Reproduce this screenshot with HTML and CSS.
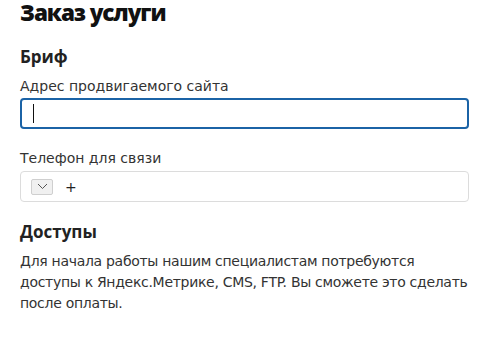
FILE: index.html
```html
<!DOCTYPE html>
<html lang="ru">
<head>
<meta charset="utf-8">
<link rel="stylesheet" href="styles.css">
</head>
<body>
<main class="page">
  <h1 class="title">Заказ услуги</h1>
  <h2 class="section">Бриф</h2>
  <div class="field">
    <label class="label">Адрес продвигаемого сайта</label>
    <div class="input input-focus"><span class="caret"></span></div>
  </div>
  <div class="field field-phone">
    <label class="label">Телефон для связи</label>
    <div class="input">
      <span class="country">
        <svg width="11" height="7" viewBox="0 0 11 7"><path d="M1 1 L5.5 5.5 L10 1" fill="none" stroke="#555" stroke-width="1"/></svg>
      </span>
      <span class="plus">+</span>
    </div>
  </div>
  <h2 class="section section-access">Доступы</h2>
  <p class="text">Для начала работы нашим специалистам потребуются доступы к Яндекс.Метрике, CMS, FTP. Вы сможете это сделать после оплаты.</p>
</main>
</body>
</html>
```
FILE: styles.css
```css
html, body {
  margin: 0;
  padding: 0;
  background: #fff;
}
body {
  font-family: "DejaVu Sans", "Open Sans", sans-serif;
  color: #222;
}
.page {
  width: 449px;
  padding: 0 26px 0 20px;
}
.title {
  margin: 0;
  font-family: "Open Sans", "DejaVu Sans", sans-serif;
  font-size: 22.5px;
  line-height: 25px;
  font-weight: 800;
  letter-spacing: -1.1px;
  color: #111;
}
.section {
  margin: 22px 0 0;
  font-family: "Open Sans", "DejaVu Sans", sans-serif;
  font-size: 17px;
  line-height: 20px;
  font-weight: 700;
  color: #222;
}
.field {
  margin-top: 10px;
  display: flex;
  flex-direction: column;
}
.field-phone {
  margin-top: 20px;
}
.label {
  font-size: 14px;
  line-height: 18px;
  color: #333;
  margin-bottom: 3px;
}
.field-phone .label {
  margin-bottom: 4px;
}
.input {
  box-sizing: border-box;
  height: 31px;
  border: 1px solid #dcdcdc;
  border-radius: 4px;
  display: flex;
  align-items: center;
  padding: 0 10px;
}
.input-focus {
  border: 2px solid #1b63a6;
  padding-left: 11px;
}
.caret {
  width: 1px;
  height: 19px;
  background: #111;
}
.country {
  box-sizing: border-box;
  width: 22px;
  height: 16px;
  background: #f0f0f0;
  border: 1px solid #cfcfcf;
  border-radius: 2px;
  display: flex;
  align-items: center;
  justify-content: center;
}
.plus {
  margin-left: 12px;
  font-size: 14px;
  color: #222;
}
.section-access {
  margin-top: 20px;
}
.text {
  margin: 9px -6px 0 0;
  font-size: 14px;
  line-height: 21px;
  letter-spacing: -0.3px;
  color: #333;
}
```
